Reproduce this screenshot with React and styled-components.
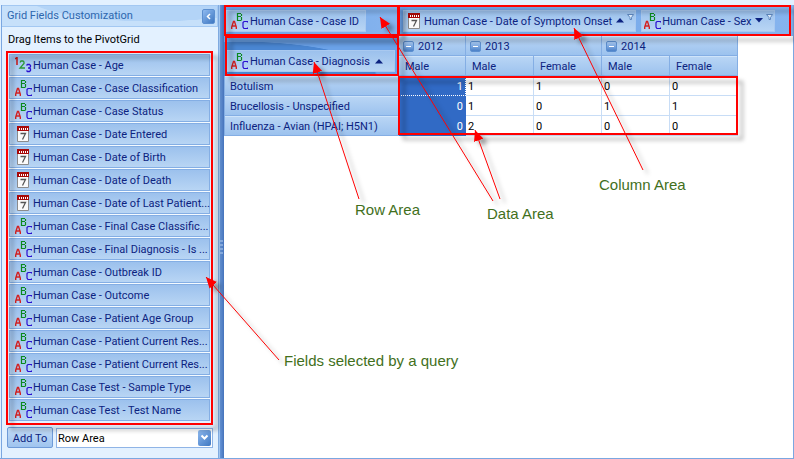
import React from "react";
import styled, { createGlobalStyle, css } from "styled-components";

const GlobalStyle = createGlobalStyle`
  * { box-sizing: border-box; }
  body { margin: 0; background: #e3f1ff; }
  body, button, select, table { font: 11px/14px Roboto, "Liberation Sans", Arial, sans-serif; }
`;

const marked = css`
  &::after {
    content: "";
    position: absolute;
    z-index: 1;
    border: 2px solid #f00;
    filter: drop-shadow(5px 5px 2px rgba(0, 0, 0, 0.35));
    pointer-events: none;
  }
`;

const Window = styled.div`
  position: relative;
  display: flex;
  min-height: 100vh;
  padding-top: 5px;
  border-bottom: 1px solid #7ba7e1;
  overflow: hidden;
`;

const SidePanel = styled.aside`
  display: flex;
  flex-direction: column;
  flex: 0 0 217px;
  min-width: 0;
  margin-left: 1px;
  border-left: 1px solid #7ba7e1;
`;

const PanelHeader = styled.header`
  display: flex;
  align-items: center;
  justify-content: space-between;
  height: 22px;
  padding: 0 2px 0 5px;
  border: 1px solid #a3c8f2;
  border-left: 0;
  background: radial-gradient(ellipse at 70% -60%, #b3d4f7 60%, #c6e0fa 61%);
`;

const PanelTitle = styled.h2`
  margin: 0;
  font: inherit;
  color: #2d67ae;
`;

const CollapseButton = styled.button`
  display: flex;
  align-items: center;
  justify-content: center;
  width: 13px;
  height: 15px;
  padding: 0;
  border: 1px solid #5c8fd0;
  border-radius: 2px;
  background: linear-gradient(135deg, #8fbaf0, #3f78c2);
`;

const PanelHint = styled.p`
  margin: 0;
  padding: 6px 6px 0;
  color: #000;
`;

const FieldList = styled.ul`
  position: relative;
  display: grid;
  grid-template-columns: minmax(0, 1fr);
  gap: 1px;
  margin: 7px 8px 0 7px;
  padding: 0;
  list-style: none;
  background: #f4faff;
  ${marked}
  &::after { inset: -3px -3px -4px; }
`;

const FieldBox = styled.span`
  display: flex;
  align-items: center;
  height: 22px;
  padding: 0 1px 0 5px;
  gap: 1px;
  border: 1px solid #84aee4;
  background: linear-gradient(#9cc1ed, #b8d5f4);
  color: #0c2380;
  white-space: nowrap;
  ${(p) => p.$variant === "row" && css`
    padding: 0 6px 0 4px;
    gap: 2px;
    border-color: #a9c9f0;
  `}
  ${(p) => p.$variant === "column" && css`
    padding: 0 1px 0 2px;
    border-color: #a9c9f0;
  `}
`;

const FieldName = styled.span`
  padding-top: 2px;
`;

const IconSlot = styled.span`
  display: flex;
  flex: 0 0 17px;
`;

const Marks = styled.span`
  display: flex;
  align-items: center;
  gap: 3px;
  margin-left: 3px;
`;

const AddForm = styled.form`
  display: flex;
  align-items: center;
  gap: 3px;
  padding: 6px 5px 9px 5px;
`;

const AddButton = styled.button`
  width: 46px;
  height: 21px;
  padding: 2px 0 0;
  border: 1px solid #6f9bd8;
  border-radius: 2px;
  background: linear-gradient(#c3dcf7, #9fc4ef);
  color: #0c2380;
`;

const SelectWrap = styled.label`
  display: grid;
  flex: 1;
  align-items: center;
  height: 20px;
  border: 1px solid #8fb4e6;
  background: #fff;
`;

const AreaSelect = styled.select`
  grid-area: 1 / 1;
  width: 100%;
  height: 18px;
  padding: 2px 1px 0;
  border: 0;
  background: none;
  color: #000;
  appearance: none;
`;

const SelectArrow = styled.span`
  display: flex;
  grid-area: 1 / 1;
  align-items: center;
  justify-content: center;
  justify-self: end;
  width: 13px;
  height: 16px;
  margin-right: 1px;
  border-radius: 2px;
  background: linear-gradient(135deg, #8fbaf0, #3f78c2);
  pointer-events: none;
`;

const Splitter = styled.div`
  display: flex;
  flex: 0 0 6px;
  align-items: center;
  justify-content: center;
  padding-top: 30px;
  background: linear-gradient(90deg, #7faae0 0 1px, #a3c6ef 1px 2px, #6695d8 2px, #4673ba);
`;

const PivotPanel = styled.main`
  flex: 1;
  min-width: 0;
  border-right: 1px solid #7ba7e1;
  background: #fff;
`;

const AreaBar = styled.div`
  display: grid;
  grid-template-columns: 175px minmax(0, 1fr);
  height: 31px;
`;

const Area = styled.section`
  position: relative;
  display: flex;
  align-items: center;
  gap: 5px;
  padding-left: ${(p) => (p.$wide ? "4px" : "2px")};
  background: linear-gradient(90deg, #6ba2e8, #86b4ee);
  ${marked}
  &::after { inset: ${(p) => (p.$wide ? "0 2px 0 -1px" : "0")}; }
`;

const Pivot = styled.table`
  width: 514px;
  border-spacing: 0;
  table-layout: fixed;
`;

const Body = styled.tbody`
  position: relative;
  ${marked}
  &::after { inset: 0 0 1px 174px; }
`;

const Col = styled.col`
  width: ${(p) => p.$w}px;
`;

const headCell = css`
  height: 20px;
  padding: 2px 0 0 6px;
  border: solid #84aee4;
  border-width: 0 1px 1px 0;
  background: linear-gradient(#bad6f5, #9cc2ee);
  box-shadow: inset 0 1px #cfe4fa;
  color: #0c2380;
  font-weight: normal;
  text-align: left;
  white-space: nowrap;
`;

const HeadCell = styled.th`
  ${headCell}
`;

const RowHead = styled.th`
  ${headCell}
  border-left: 1px solid #84aee4;
  padding-left: 5px;
`;

const CornerCell = styled.th`
  position: relative;
  padding: 14px 4px 4px 2px;
  background: radial-gradient(ellipse at 10% 100%, #4a86d2 60%, #6ba2e8 61%);
  font-weight: normal;
  ${marked}
  &::after { inset: 0 0 0 1px; }
`;

const YearLabel = styled.span`
  display: flex;
  align-items: center;
  gap: 4px;
  margin-left: -2px;
`;

const ToggleButton = styled.button`
  display: flex;
  align-items: center;
  justify-content: center;
  width: 11px;
  height: 11px;
  padding: 0;
  border: 1px solid #5c8fd0;
  border-radius: 2px;
  background: linear-gradient(#a9cbf5, #4a80c8);
`;

const DataCell = styled.td`
  height: 20px;
  padding: 2px 2px 0;
  border: solid #c8ddf6;
  border-width: 0 1px 1px 0;
  background: #fff;
  color: #000;
  text-align: left;
  ${(p) => p.$selected && css`
    border-color: #316ac5;
    background: #316ac5;
    color: #fff;
    text-align: right;
  `}
  ${(p) => p.$focused && css`
    border: 1px dotted #fff;
  `}
`;

const Arrows = styled.svg`
  position: absolute;
  top: 0;
  left: 0;
  z-index: 2;
  filter: drop-shadow(5px 4px 2px rgba(0, 0, 0, 0.35));
  pointer-events: none;
`;

const Note = styled.span`
  position: absolute;
  top: ${(p) => p.$y}px;
  left: ${(p) => p.$x}px;
  z-index: 3;
  color: #42701c;
  font-family: "Liberation Sans", Arial, sans-serif;
  font-size: 15px;
  line-height: 18px;
  white-space: nowrap;
`;

function TextIcon() {
  return (
    <svg width="17" height="16" viewBox="0 0 17 16" fill="none">
      <path d="M.7 16V14L2.500 8.500h1L5.300 14v2M1.500 13h3.500" stroke="#d42020" strokeWidth="1.400" />
      <path d="M6.500 0v8M6 .5h4M6 3.500h4M6 7.500h4.500M10.500 1v2M10.500 4v3" stroke="#0a8a1e" strokeWidth="1.200" />
      <path d="M16.500 9.500v-1H13l-1 1V14l1 1.500h3.500v-1" stroke="#2a10d0" strokeWidth="1.200" />
    </svg>
  );
}

function NumberIcon() {
  return (
    <svg width="17" height="16" viewBox="0 0 17 16" fill="none">
      <path d="M0 2l2-1.500V8" stroke="#c81414" strokeWidth="1.500" />
      <path d="M5 5.500l1-1.500h2l1 1v1.500L5 11h5" stroke="#2c9a35" strokeWidth="1.300" />
      <path d="M11.500 8.500l1-1h2l1 1v1l-1 1.500H13h1.500l1 1v1.500l-1 1h-2l-1-1" stroke="#2a10d0" strokeWidth="1.300" />
    </svg>
  );
}

function DateIcon() {
  return (
    <svg width="17" height="16" viewBox="0 0 17 16" fill="none">
      <path d="M2.500 3.500h11v12h-11z" fill="#fafafa" stroke="#8c8c8c" />
      <path d="M2 0h12v5H2z" fill="#a80808" />
      <path d="M4.500 2v2M6.500 2v2M8.500 2v2M10.500 2v2M12.500 2v2" stroke="#fff" strokeWidth="1" />
      <path d="M5.500 7.500h5L7.500 13.500" stroke="#555" strokeWidth="1.300" />
    </svg>
  );
}

const icons = { text: TextIcon, number: NumberIcon, date: DateIcon };

function Field({ as, name, type = "text", sort, filter, variant }) {
  const Icon = icons[type];
  return (
    <FieldBox as={as} $variant={variant}>
      <IconSlot><Icon /></IconSlot>
      <FieldName>{name}</FieldName>
      {sort && (
        <Marks>
          <svg width="8" height="5"><path d={sort === "up" ? "M0 4.500L4 0l4 4.500z" : "M0 0h8L4 4.500z"} fill="#0c2380" /></svg>
          {filter && (
            <svg width="7" height="18" fill="none"><path d="M.5 2.500h6l-2 3v2h-1.500v-2z" fill="#dcebfb" stroke="#5d86bd" /></svg>
          )}
        </Marks>
      )}
    </FieldBox>
  );
}

const fields = [
  ["Human Case - Age", "number"],
  ["Human Case - Case Classification"],
  ["Human Case - Case Status"],
  ["Human Case - Date Entered", "date"],
  ["Human Case - Date of Birth", "date"],
  ["Human Case - Date of Death", "date"],
  ["Human Case - Date of Last Patient...", "date"],
  ["Human Case - Final Case Classific..."],
  ["Human Case - Final Diagnosis - Is ..."],
  ["Human Case - Outbreak ID"],
  ["Human Case - Outcome"],
  ["Human Case - Patient Age Group"],
  ["Human Case - Patient Current Res..."],
  ["Human Case - Patient Current Res..."],
  ["Human Case Test - Sample Type"],
  ["Human Case Test - Test Name"],
];

const rows = [
  ["Botulism", [1, 1, 1, 0, 0]],
  ["Brucellosis - Unspecified", [0, 1, 0, 1, 1]],
  ["Influenza - Avian (HPAI; H5N1)", [0, 2, 0, 0, 0]],
];

const years = [["2012", 1], ["2013", 2], ["2014", 2]];
const sexes = ["Male", "Male", "Female", "Male", "Female"];

const arrows = [
  [279, 360, 206, 277],
  [359, 199, 314, 62],
  [493, 201, 380, 17],
  [500, 199, 475, 130],
  [643, 170, 574, 28],
];

const notes = [
  ["Row Area", 355, 201],
  ["Data Area", 487, 205],
  ["Column Area", 599, 176],
  ["Fields selected by a query", 284, 352],
];

export default function App() {
  return (
    <>
      <GlobalStyle />
      <Window>
        <SidePanel>
          <PanelHeader>
            <PanelTitle>Grid Fields Customization</PanelTitle>
            <CollapseButton aria-label="Collapse">
              <svg width="5" height="7" fill="none"><path d="M4 1L1.500 3.500 4 6" stroke="#fff" strokeWidth="1.500" /></svg>
            </CollapseButton>
          </PanelHeader>
          <PanelHint>Drag Items to the PivotGrid</PanelHint>
          <FieldList>
            {fields.map(([name, type], i) => <Field as="li" key={i} name={name} type={type} />)}
          </FieldList>
          <AddForm onSubmit={(e) => e.preventDefault()}>
            <AddButton>Add To</AddButton>
            <SelectWrap>
              <AreaSelect aria-label="Area" defaultValue="Row Area">
                <option>Row Area</option>
                <option>Column Area</option>
                <option>Data Area</option>
              </AreaSelect>
              <SelectArrow>
                <svg width="9" height="7" fill="none"><path d="M1.500 1.500l3 3 3-3" stroke="#fff" strokeWidth="2" /></svg>
              </SelectArrow>
            </SelectWrap>
          </AddForm>
        </SidePanel>
        <Splitter>
          <svg width="3" height="14"><path d="M0 1h3M0 5h3M0 9h3M0 13h3" stroke="#b9d4f5" /></svg>
        </Splitter>
        <PivotPanel>
          <AreaBar>
            <Area><Field variant="row" name="Human Case - Case ID" /></Area>
            <Area $wide>
              <Field variant="column" name="Human Case - Date of Symptom Onset" type="date" sort="up" filter />
              <Field variant="column" name="Human Case - Sex" sort="down" filter />
            </Area>
          </AreaBar>
          <Pivot>
            <colgroup>
              <Col $w={175} /><Col $w={67} /><Col $w={68} /><Col $w={68} /><Col $w={68} /><Col $w={68} />
            </colgroup>
            <thead>
              <tr>
                <CornerCell rowSpan={2}><Field variant="row" name="Human Case - Diagnosis" sort="up" /></CornerCell>
                {years.map(([year, span]) => (
                  <HeadCell key={year} colSpan={span}>
                    <YearLabel>
                      <ToggleButton aria-label={`Collapse ${year}`}>
                        <svg width="5" height="1"><path d="M0 .5h5" stroke="#fff" /></svg>
                      </ToggleButton>
                      {year}
                    </YearLabel>
                  </HeadCell>
                ))}
              </tr>
              <tr>{sexes.map((sex, i) => <HeadCell key={i}>{sex}</HeadCell>)}</tr>
            </thead>
            <Body>
              {rows.map(([name, values], r) => (
                <tr key={name}>
                  <RowHead scope="row">{name}</RowHead>
                  {values.map((v, c) => (
                    <DataCell key={c} $selected={c === 0} $focused={c === 0 && r === 0}>{v}</DataCell>
                  ))}
                </tr>
              ))}
            </Body>
          </Pivot>
        </PivotPanel>
        <Arrows width="794" height="459">
          <defs>
            <marker id="head" markerUnits="userSpaceOnUse" markerWidth="11" markerHeight="10" refX="11" refY="5" orient="auto">
              <path d="M0 0L11 5 0 10z" fill="#f00" />
            </marker>
          </defs>
          {arrows.map(([x1, y1, x2, y2]) => (
            <line key={`${x1}-${y1}`} x1={x1} y1={y1} x2={x2} y2={y2} stroke="#f00" markerEnd="url(#head)" />
          ))}
        </Arrows>
        {notes.map(([label, x, y]) => <Note key={label} $x={x} $y={y}>{label}</Note>)}
      </Window>
    </>
  );
}
